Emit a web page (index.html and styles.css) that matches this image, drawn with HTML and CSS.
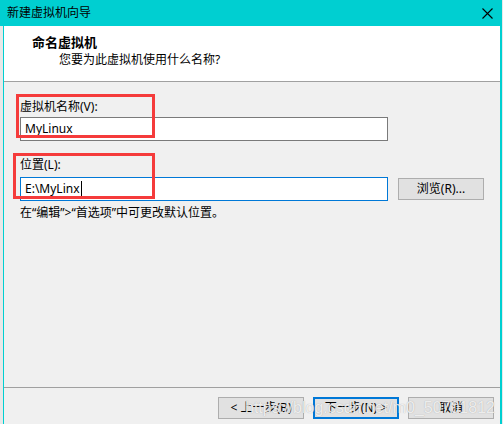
FILE: index.html
```html
<!DOCTYPE html>
<html lang="zh-CN">
<head>
<meta charset="utf-8">
<title>新建虚拟机向导</title>
<link rel="stylesheet" href="styles.css">
</head>
<body>
<div class="window">
  <div class="titlebar">
    <span class="title">新建虚拟机向导</span>
    <svg class="close" width="11" height="11" viewBox="0 0 11 11"><path d="M0.5 0.5L10.5 10.5M10.5 0.5L0.5 10.5" stroke="#000" stroke-width="1.1" fill="none"/></svg>
  </div>
  <div class="frame">
    <div class="header">
      <div class="h-title">命名虚拟机</div>
      <div class="h-sub">您要为此虚拟机使用什么名称?</div>
    </div>
    <div class="content">
      <div class="group">
        <div class="label">虚拟机名称(V):</div>
        <div class="row">
          <div class="input">MyLinux</div>
        </div>
      </div>
      <div class="group group2">
        <div class="label">位置(L):</div>
        <div class="row row2">
          <div class="input focus">E:\MyLinx<span class="caret"></span></div>
          <div class="btn browse">浏览(R)...</div>
        </div>
      </div>
      <div class="hint">在“编辑”&gt;“首选项”中可更改默认位置。</div>
    </div>
    <div class="footer">
      <div class="btn">&lt; 上一步(B)</div>
      <div class="btn default">下一步(N) &gt;</div>
      <div class="btn">取消</div>
    </div>
  </div>
  <div class="mark mark1"></div>
  <div class="mark mark2"></div>
  <div class="watermark">https://blog.csdn.net/m0_50701812</div>
</div>
</body>
</html>
```
FILE: styles.css
```css
html, body {
  margin: 0;
  padding: 0;
}
body {
  background: #e8e8e8;
  font-family: "Noto Sans", "Noto Sans CJK SC", sans-serif;
  font-size: 12px;
  color: #000;
}
.window {
  position: relative;
  width: 502px;
  height: 424px;
  display: flex;
  flex-direction: column;
  overflow: hidden;
}
.titlebar {
  height: 26px;
  flex: none;
  background: #00cfd1;
  display: flex;
  align-items: center;
  justify-content: space-between;
  padding: 0 9px 0 7px;
}
.title {
  font-size: 12px;
  line-height: 16px;
  color: #000;
}
.close {
  display: block;
}
.frame {
  flex: 1;
  margin-left: 3px;
  border-left: 1px solid #00cfd1;
  border-right: 2px solid #00cfd1;
  background: #f0f0f0;
  display: flex;
  flex-direction: column;
}
.header {
  flex: none;
  height: 48px;
  padding-top: 7px;
  background: #fff;
  border-bottom: 1px solid #a0a0a0;
}
.h-title {
  padding-left: 28px;
  font-weight: bold;
  font-size: 13px;
  line-height: 18px;
}
.h-sub {
  padding-left: 55px;
  line-height: 18px;
}
.content {
  flex: 1;
  padding: 16px 0 0 16px;
}
.label {
  line-height: 18px;
  height: 18px;
}
.row {
  display: flex;
  align-items: center;
  gap: 10px;
  margin-top: 1px;
}
.group2 {
  margin-top: 15px;
}
.row2 {
  margin-top: 3px;
}
.input {
  box-sizing: border-box;
  width: 368px;
  height: 24px;
  border: 1px solid #7a7a7a;
  background: #fff;
  padding-left: 4px;
  line-height: 22px;
  color: #000;
  display: flex;
  align-items: center;
}
.input.focus {
  border-color: #0078d7;
}
.caret {
  display: inline-block;
  width: 1px;
  height: 16px;
  background: #000;
  margin-left: 1px;
}
.btn {
  box-sizing: border-box;
  width: 86px;
  height: 22px;
  background: #e1e1e1;
  border: 1px solid #adadad;
  display: flex;
  align-items: center;
  justify-content: center;
  line-height: 16px;
}
.btn.default {
  border: 2px solid #0078d7;
}
.hint {
  margin-top: 3px;
  line-height: 18px;
}
.footer {
  flex: none;
  height: 27px;
  border-top: 1px solid #a0a0a0;
  padding: 9px 6px 0 0;
  display: flex;
  justify-content: flex-end;
  gap: 9px;
}
.mark {
  position: absolute;
  box-sizing: border-box;
  border: 3px solid #f53b3b;
}
.mark1 {
  left: 16px;
  top: 94px;
  width: 139px;
  height: 44px;
}
.mark2 {
  left: 13px;
  top: 153px;
  width: 142px;
  height: 46px;
}
.watermark {
  position: absolute;
  left: 245px;
  top: 398px;
  font-family: "Liberation Sans", Arial, sans-serif;
  font-size: 16px;
  line-height: 20px;
  color: rgba(255, 255, 255, 0.8);
  text-shadow: 0 0 1px rgba(120, 120, 120, 0.6);
  white-space: nowrap;
}
```
